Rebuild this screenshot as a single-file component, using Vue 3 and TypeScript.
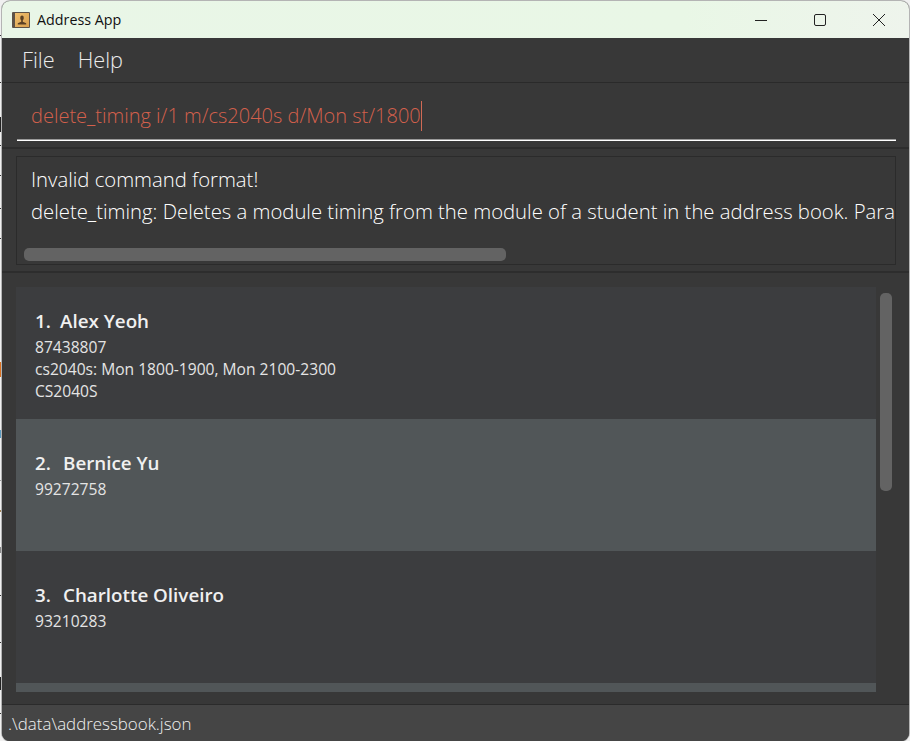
<script setup lang="ts">
interface Person {
  index: string
  name: string
  lines: string[]
  shade: string
  sparse: boolean
}

interface Mark {
  y: number
  h: number
  fill: string
}

const people: Person[] = [
  {
    index: '1.',
    name: 'Alex Yeoh',
    lines: ['87438807', 'cs2040s: Mon 1800-1900, Mon 2100-2300', 'CS2040S'],
    shade: 'odd',
    sparse: false,
  },
  { index: '2.', name: 'Bernice Yu', lines: ['99272758'], shade: 'even', sparse: true },
  { index: '3.', name: 'Charlotte Oliveiro', lines: ['93210283'], shade: 'odd', sparse: true },
  { index: '', name: '', lines: [], shade: 'even', sparse: true },
]

// Slivers of whatever sits behind the window, visible along its left edge.
const marks: Mark[] = [
  { y: 35, h: 1, fill: '#333' },
  { y: 82, h: 1, fill: '#333' },
  { y: 117, h: 15, fill: '#222' },
  { y: 145, h: 1, fill: '#333' },
  { y: 175, h: 1, fill: '#333' },
  { y: 208, h: 1, fill: '#333' },
  { y: 238, h: 1, fill: '#333' },
  { y: 362, h: 15, fill: '#d9701f' },
  { y: 430, h: 8, fill: '#5a9ac0' },
  { y: 480, h: 1, fill: '#999' },
  { y: 510, h: 2, fill: '#a08050' },
  { y: 547, h: 6, fill: '#888' },
  { y: 595, h: 1, fill: '#333' },
  { y: 642, h: 1, fill: '#333' },
  { y: 677, h: 13, fill: '#222' },
  { y: 713, h: 1, fill: '#333' },
]
</script>

<template>
  <div class="desktop">
    <svg class="behind" width="2" height="741" viewBox="0 0 2 741">
      <rect v-for="m in marks" :key="m.y" x="0" :y="m.y" width="2" :height="m.h" :fill="m.fill" />
    </svg>
    <div class="window">
      <header class="titlebar">
        <svg class="app-icon" width="18" height="16" viewBox="0 0 18 16">
          <defs>
            <linearGradient id="cover" x1="0" y1="0" x2="1" y2="1">
              <stop offset="0" stop-color="#f0c070" />
              <stop offset="1" stop-color="#d99f4c" />
            </linearGradient>
          </defs>
          <rect x="0" y="0" width="18" height="16" rx="1" fill="#5d5248" />
          <rect x="3" y="1" width="14" height="14" fill="url(#cover)" />
          <ellipse cx="10" cy="6" rx="1.8" ry="2.4" fill="#5b4024" />
          <path d="M9.2 8h1.6v1.8l3.4 1.4v1.3H5.8v-1.3l3.4-1.4z" fill="#5b4024" />
        </svg>
        <span class="title">Address App</span>
        <div class="controls">
          <svg width="12" height="12" viewBox="0 0 12 12"><path d="M0 6.5h12" stroke="#222" stroke-width="1" fill="none" /></svg>
          <svg width="12" height="12" viewBox="0 0 12 12"><rect x="0.5" y="0.5" width="11" height="11" rx="1.5" stroke="#222" stroke-width="1" fill="none" /></svg>
          <svg width="12" height="12" viewBox="0 0 12 12"><path d="M0 0l12 12M12 0L0 12" stroke="#222" stroke-width="1" fill="none" /></svg>
        </div>
      </header>

      <nav class="menu">
        <span>File</span>
        <span>Help</span>
      </nav>

      <section class="command">
        <div class="command-input">
          <span>delete_timing i/1 m/cs2040s d/Mon st/1800</span><i class="caret"></i>
        </div>
      </section>

      <section class="result-wrap">
        <div class="result">
          <div class="result-text">Invalid command format!</div>
          <div class="result-text">delete_timing: Deletes a module timing from the module of a student in the address book. Para</div>
          <div class="hbar"><div class="hthumb"></div></div>
        </div>
      </section>

      <section class="list-wrap">
        <div class="list">
          <article v-for="(p, i) in people" :key="i" class="card" :class="[p.shade, { sparse: p.sparse }]">
            <div class="name"><span class="idx" :class="{ narrow: !p.sparse }">{{ p.index }}</span>{{ p.name }}</div>
            <div v-for="line in p.lines" :key="line" class="line">{{ line }}</div>
          </article>
        </div>
        <div class="vbar"><div class="vthumb"></div></div>
      </section>

      <footer class="status">.\data\addressbook.json</footer>
    </div>
  </div>
</template>

<style>
html, body { margin: 0; background: #fff; }
</style>

<style scoped>
.desktop {
  width: 910px;
  height: 741px;
  overflow: hidden;
  display: flex;
  align-items: flex-start;
  background: #f0f0f0;
  font-family: "Open Sans", "Noto Sans", sans-serif;
}
.behind { flex: none; }
.window {
  width: 907px;
  height: 740px;
  margin-top: 1px;
  flex: none;
  display: flex;
  flex-direction: column;
  overflow: hidden;
  border-radius: 8px;
  background: #383838;
  box-shadow: 0 0 0 1px #b4b4b4;
}
.titlebar {
  height: 37px;
  flex: none;
  display: flex;
  align-items: center;
  padding-left: 10px;
  background: linear-gradient(90deg, #e9f6e7, #e9f7e6 75%, #eef4ec);
  box-sizing: border-box;
}
.app-icon { flex: none; }
.title {
  margin-left: 7px;
  font-size: 14.3px;
  color: #111;
}
.controls {
  margin-left: auto;
  display: flex;
  gap: 47px;
  padding-right: 24px;
  align-items: center;
}
.menu {
  height: 45px;
  flex: none;
  box-sizing: border-box;
  display: flex;
  gap: 23px;
  align-items: center;
  padding: 0 0 2px 20px;
  border-bottom: 1px solid #2a2a2a;
  font-size: 21.7px;
  font-weight: 300;
  color: #ececec;
}
.command {
  height: 66px;
  flex: none;
  box-sizing: border-box;
  padding: 0 13px 0 15px;
  border-bottom: 2px solid #2d2d2d;
}
.command-input {
  height: 58px;
  box-sizing: border-box;
  display: flex;
  align-items: center;
  padding: 8px 0 0 14px;
  border-bottom: 1px solid #fff;
  box-shadow: inset 0 -1px 0 #9a9a9a;
  font-size: 20px;
  font-weight: 300;
  color: #d4604c;
}
.caret {
  width: 1px;
  height: 30px;
  background: #d06a55;
}
.result-wrap {
  height: 124px;
  flex: none;
  box-sizing: border-box;
  padding: 7px 13px 6px 14px;
  border-bottom: 2px solid #2d2d2d;
}
.result {
  position: relative;
  height: 109px;
  box-sizing: border-box;
  padding-left: 14px;
  padding-top: 6px;
  overflow: hidden;
  border: 1px solid #2b2b2b;
  background: #383838;
}
.result-text {
  height: 32px;
  line-height: 32px;
  white-space: nowrap;
  font-size: 20.3px;
  font-weight: 300;
  color: #fff;
}
.hbar {
  position: absolute;
  left: 7px;
  right: 0;
  bottom: 3px;
}
.hthumb {
  width: 482px;
  height: 13px;
  border-radius: 5px;
  background: #636363;
}
.list-wrap {
  flex: 1;
  min-height: 0;
  display: flex;
  padding: 14px 0 12px 14px;
  box-sizing: border-box;
  overflow: hidden;
}
.list {
  width: 860px;
  flex: none;
  overflow: hidden;
}
.card {
  height: 132px;
  box-sizing: border-box;
  padding: 18px 0 0 19px;
}
.card.sparse { padding-top: 28px; }
.card.odd { background: #3c3d3f; }
.card.even { background: #515658; }
.name {
  height: 31px;
  line-height: 32px;
  font-size: 18.8px;
  font-weight: 600;
  white-space: pre;
  color: #f0f0f0;
}
.idx {
  display: inline-block;
  width: 28px;
}
.idx.narrow { width: 25px; }
.line {
  height: 22px;
  line-height: 22px;
  font-size: 15.6px;
  color: #e4e4e4;
}
.vbar {
  width: 31px;
  flex: none;
  padding: 6px 0 0 4px;
  box-sizing: border-box;
}
.vthumb {
  width: 12px;
  height: 198px;
  border-radius: 5px;
  background: #636363;
}
.status {
  height: 37px;
  flex: none;
  box-sizing: border-box;
  padding-left: 6px;
  line-height: 37px;
  border-top: 1px solid #2b2b2b;
  background: #454545;
  font-size: 16.9px;
  font-weight: 300;
  color: #f0f0f0;
}
</style>
